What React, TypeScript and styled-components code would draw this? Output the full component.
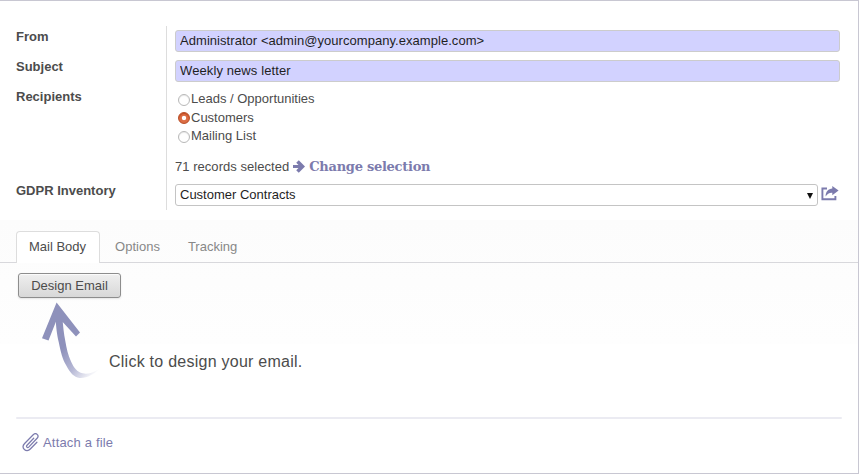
import React from "react";
import styled, { createGlobalStyle } from "styled-components";

const GlobalStyle = createGlobalStyle`
  * { box-sizing: border-box; }
  body { margin: 0; background: #fff; }
`;

const Sheet = styled.main`
  width: 859px;
  height: 474px;
  display: flex;
  flex-direction: column;
  overflow: hidden;
  border: solid #c8c7d2;
  border-width: 1px 1px 1px 0;
  background: #fff;
  color: #4c4c4c;
  font: 13px/18px "Liberation Sans", Arial, sans-serif;
`;

const Form = styled.section`
  display: grid;
  grid-template-columns: 150px 674px;
  height: 184px;
  margin: 25px 0 0 16px;
`;

const Labels = styled.div`
  display: grid;
  grid-template-rows: 30px 30px 94px 30px;
  height: 184px;
  padding-top: 2px;
  font-weight: bold;
`;

const Fields = styled.div`
  border-left: 1px solid #ddd;
  height: 184px;
  padding: 4px 0 0 8px;
  display: flex;
  flex-direction: column;
`;

const Input = styled.input<{ $tracking: number }>`
  width: 665px;
  height: 22px;
  flex: none;
  margin: 0 0 8px;
  padding: 0 4px 2px;
  border: 1px solid #ccc;
  border-radius: 3px;
  background: #d2d2ff;
  color: #1f1f1f;
  font: inherit;
  letter-spacing: ${(p) => p.$tracking}px;
  outline: none;
`;

const RadioGroup = styled.div`
  display: grid;
  grid-template-rows: 19px 18px 19px;
  padding-left: 3px;
`;

const RadioLabel = styled.label`
  display: flex;
  align-items: flex-start;
  white-space: nowrap;
`;

const RadioMark = styled.span<{ $checked?: boolean }>`
  width: 12px;
  height: 12px;
  margin: ${(p) => (p.$checked ? 3 : 4)}px 1px 0 0;
  flex: none;
  border: 1px solid ${(p) => (p.$checked ? "#b94d26" : "#b8b8b8")};
  border-radius: 50%;
  background: ${(p) => (p.$checked ? "radial-gradient(circle, #fff 0 1.8px, #dc6d45 2.6px)" : "#fff")};
  box-shadow: ${(p) => (p.$checked ? "inset 0 1px 1px #bd4b20" : "inset 0 1px 1px #e9e9e9")};
`;

const Selection = styled.div`
  display: flex;
  height: 18px;
  margin-top: 12px;
  letter-spacing: 0.04px;
  white-space: nowrap;
`;

const ChangeLink = styled.a`
  display: flex;
  color: #7c7bad;
  font: bold 13px/18px "DejaVu Serif", serif;
  letter-spacing: -0.27px;
  svg { margin: 2px 4px 0 4px; }
`;

const SelectRow = styled.div`
  display: flex;
  margin-top: 8px;
  svg { margin: 2px 0 0 3px; }
`;

const SelectBox = styled.button`
  display: flex;
  justify-content: space-between;
  align-items: center;
  width: 643px;
  height: 22px;
  padding: 0 3px 0 4px;
  border: 1px solid #c4c4c4;
  border-radius: 3px;
  background: #fff;
  color: #1f1f1f;
  font: inherit;
  svg { margin: 2px 0 0; }
`;

const Notebook = styled.section`
  margin-top: 10px;
  height: 124px;
  flex: none;
  background: linear-gradient(#fcfcfc, #fefefe);
`;

const Tabs = styled.nav`
  display: flex;
  height: 43px;
  padding: 11px 0 0 16px;
  border-bottom: 1px solid #d8d8dc;
`;

const Tab = styled.a<{ $active?: boolean }>`
  height: 32px;
  padding: 6px ${(p) => (p.$active ? "13px 6px 12px" : "14px")};
  margin-right: ${(p) => (p.$active ? 0 : -1)}px;
  border: 1px solid ${(p) => (p.$active ? "#ddd" : "transparent")};
  border-bottom: 0;
  border-radius: 4px 4px 0 0;
  background: ${(p) => (p.$active ? "#fff" : "transparent")};
  color: ${(p) => (p.$active ? "#4c4c4c" : "#888")};
  white-space: nowrap;
  & + & + & { margin-left: -1px; }
`;

const DesignButton = styled.button`
  width: 103px;
  height: 25px;
  margin: 10px 0 0 18px;
  padding: 0;
  border: 1px solid #8d8d8d;
  border-radius: 3px;
  background: linear-gradient(#efefef, #d8d8d8);
  box-shadow: 0 1px 2px rgba(0, 0, 0, .1), inset 0 1px 1px rgba(255, 255, 255, .8);
  color: #4c4c4c;
  font: inherit;
`;

const Hint = styled.div`
  display: flex;
  height: 82px;
  flex: none;
  margin: -44px 0 0 41px;
  p {
    margin: 52px 0 0 8px;
    font-size: 16px;
    line-height: 20px;
    letter-spacing: 0.25px;
    white-space: nowrap;
  }
`;

const Separator = styled.hr`
  width: 826px;
  height: 2px;
  margin: 35px 0 0 16px;
  border: 0;
  border-radius: 1px;
  background: #ebebf2;
  flex: none;
`;

const Attach = styled.a`
  display: flex;
  margin: 14px 0 0 22px;
  color: #7c7bad;
  letter-spacing: 0.18px;
  svg { margin-right: 4px; }
  span { margin-top: 1px; }
`;

const ArrowRight = () => (
  <svg width="12" height="13" viewBox="0 0 12 13" fill="none" stroke="currentColor">
    <path d="M0 6.5h9" strokeWidth="3" />
    <path d="M4.5 1.5l5 5-5 5" strokeWidth="3.6" />
  </svg>
);

const ShareIcon = () => (
  <svg width="18" height="16" viewBox="0 0 18 16">
    <path d="M6 2.5H1.4v10.7h13V10" fill="none" stroke="#7c7bad" strokeWidth="1.9" />
    <path d="M11.3 0L17.6 4.6l-6.3 4.7V6.7C8 6.6 6.2 7.8 4.6 10.6 4.5 5.4 7.5 2.8 11.3 2.5z" fill="#7c7bad" />
  </svg>
);

const CurvedArrow = () => (
  <svg width="60" height="82" viewBox="0 0 60 82">
    <defs>
      <linearGradient id="tail" gradientUnits="userSpaceOnUse" x1="24" y1="46" x2="56" y2="73">
        <stop offset="0" stopColor="#8e91bb" />
        <stop offset=".5" stopColor="#b6b8d5" />
        <stop offset="1" stopColor="#fff" />
      </linearGradient>
    </defs>
    <path d="M14.5 16C15 27 16 35 17.7 42 20 53 21.5 59 25 65 29 73 33 77 38.5 78 46 78.5 53 74 58.5 69 52 73 46 74.5 41.7 73.3 36 72 33 68 30 61.5 27 55 25.5 48 24.3 41 22.8 33 22 26 21.5 18Z" fill="url(#tail)" />
    <path d="M15.6 2.5L39 32.5 35 36.5 21.7 22 15.2 21 7.5 40.5 1 38.3Z" fill="#8e91bb" />
  </svg>
);

const PaperclipIcon = () => (
  <svg width="17" height="19" viewBox="0 0 17 19" fill="none" stroke="#7c7bad" strokeWidth="1.25" strokeLinecap="round" strokeLinejoin="round">
    <path d="M11.7 5.2L5 12.3c-1.2 1.3.4 3 1.7 1.8l8.4-8.8c2.6-2.9-1.2-6.3-3.9-3.6L2.6 10.5c-4.1 4.3 1.7 9.8 5.7 5.5l6.6-6.8" />
  </svg>
);

export default function App() {
  return (
    <>
      <GlobalStyle />
      <Sheet>
        <Form>
          <Labels><span>From</span><span>Subject</span><span>Recipients</span><span>GDPR Inventory</span></Labels>
          <Fields>
            <Input $tracking={0.05} aria-label="From" defaultValue="Administrator <admin@yourcompany.example.com>" />
            <Input $tracking={0.1} aria-label="Subject" defaultValue="Weekly news letter" />
            <RadioGroup>
              <RadioLabel><RadioMark />Leads / Opportunities</RadioLabel>
              <RadioLabel><RadioMark $checked />Customers</RadioLabel>
              <RadioLabel><RadioMark />Mailing List</RadioLabel>
            </RadioGroup>
            <Selection>71 records selected<ChangeLink><ArrowRight />Change selection</ChangeLink></Selection>
            <SelectRow>
              <SelectBox>
                Customer Contracts
                <svg width="8" height="8" viewBox="0 0 8 8"><path d="M1 1h6L4 7z" fill="#111" /></svg>
              </SelectBox>
              <ShareIcon />
            </SelectRow>
          </Fields>
        </Form>
        <Notebook>
          <Tabs><Tab $active>Mail Body</Tab><Tab>Options</Tab><Tab>Tracking</Tab></Tabs>
          <DesignButton>Design Email</DesignButton>
        </Notebook>
        <Hint><CurvedArrow /><p>Click to design your email.</p></Hint>
        <Separator />
        <Attach><PaperclipIcon /><span>Attach a file</span></Attach>
      </Sheet>
    </>
  );
}
